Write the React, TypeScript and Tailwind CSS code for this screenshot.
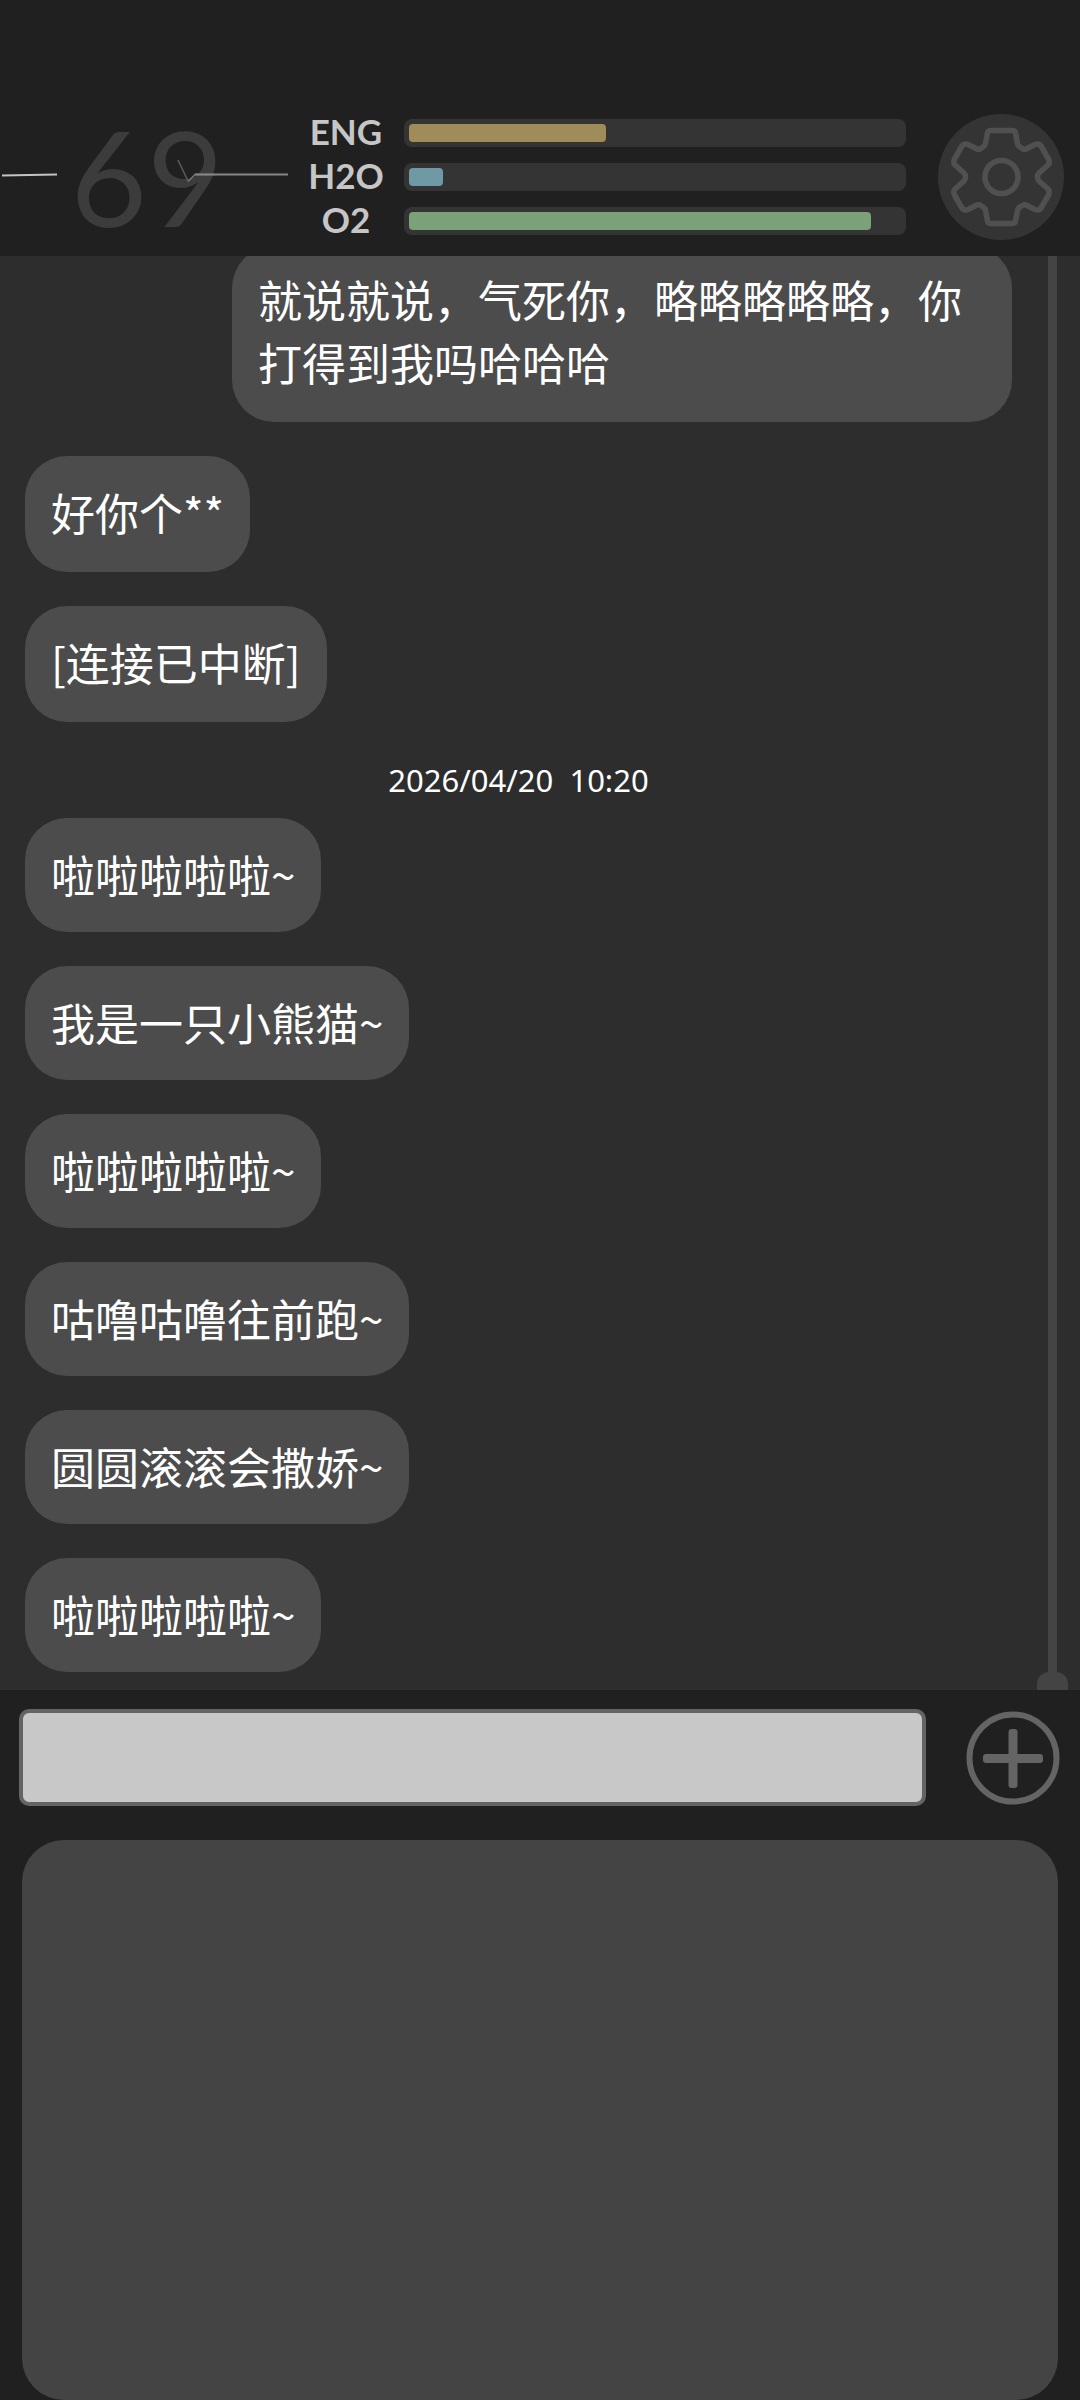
import React from "react";

type Message = {
  id: number;
  kind: "sent" | "received" | "time";
  text: string;
  tall?: boolean;
};

const messages: Message[] = [
  { id: 1, kind: "sent", text: "就说就说，气死你，略略略略略，你打得到我吗哈哈哈" },
  { id: 2, kind: "received", text: "好你个**", tall: true },
  { id: 3, kind: "received", text: "[连接已中断]", tall: true },
  { id: 4, kind: "time", text: "2026/04/20  10:20" },
  { id: 5, kind: "received", text: "啦啦啦啦啦~" },
  { id: 6, kind: "received", text: "我是一只小熊猫~" },
  { id: 7, kind: "received", text: "啦啦啦啦啦~" },
  { id: 8, kind: "received", text: "咕噜咕噜往前跑~" },
  { id: 9, kind: "received", text: "圆圆滚滚会撒娇~" },
  { id: 10, kind: "received", text: "啦啦啦啦啦~" },
];

const stats = [
  { name: "ENG", value: 40, color: "bg-[#a08c58]" },
  { name: "H2O", value: 7, color: "bg-[#6f9aa5]" },
  { name: "O2", value: 94, color: "bg-[#7aa177]" },
];

const HeartRate = () => (
  <div className="relative flex h-32 w-[290px] shrink-0 items-center justify-center pl-1 font-['Lato',sans-serif] text-[132px] leading-none text-[#3c3c3c]">
    <span>69</span>
    <svg
      className="absolute inset-0 h-full w-full"
      viewBox="0 0 290 128"
      fill="none"
      aria-hidden="true"
    >
      <path d="M2 63.5L57 62.5" stroke="#c4c4c4" strokeWidth="2" />
      <path d="M178 48L188 69" stroke="#5c5c5c" strokeWidth="1.5" />
      <path d="M188 69.5L195 62.5H215" stroke="#777" strokeWidth="1.5" />
      <path d="M195 62.5H288" stroke="#868686" strokeWidth="2" />
    </svg>
  </div>
);

const StatBars = () => (
  <div className="flex grow flex-col gap-2">
    {stats.map((stat) => (
      <div key={stat.name} className="flex h-9 items-center gap-[18px]">
        <span className="h-9 w-20 shrink-0 text-center font-['Lato',sans-serif] text-[35px] leading-[33px] font-bold text-[#c6c6c6]">
          {stat.name}
        </span>
        <div className="h-7 grow rounded-lg bg-[#343434] p-[5px]">
          <div
            className={`h-full rounded-sm ${stat.color}`}
            style={{ width: `${stat.value}%` }}
          />
        </div>
      </div>
    ))}
  </div>
);

const GearIcon = () => (
  <svg className="h-full w-full" viewBox="0 0 126 126" fill="none" aria-hidden="true">
    <g stroke="#505050" strokeWidth="5.6" strokeLinejoin="round">
      <path d="M53 16.5H74Q77 16.5 77.500 19L79.500 29.500Q80 32 82 33L85 35Q86 35.500 88 35L97 30.500Q101 29 103 32L110.500 45Q112 49 110 51L101 59Q99.500 60.500 99.500 63Q99.500 65.500 101 67L110 75Q112 77 110.500 81L103 94Q101 97 97 95.500L88 91Q86 90.500 85 91L82 93Q80 94 79.500 96.500L77.500 107Q77 109.500 74 109.500H53Q50 109.500 49.500 107L47.500 96.500Q47 94 45 93L42 91Q41 90.500 39 91L30 95.500Q26 97 24 94L16.500 81Q15 77 17 75L26 67Q27.500 65.500 27.500 63Q27.500 60.500 26 59L17 51Q15 49 16.500 45L24 32Q26 29 30 30.500L39 35Q41 35.500 42 35L45 33Q47 32 47.500 29.500L49.500 19Q50 16.500 53 16.500Z" />
      <circle cx="63.5" cy="63" r="16.5" />
    </g>
  </svg>
);

const Bubble = ({ message }: { message: Message }) => {
  if (message.kind === "time") {
    return (
      <time className="mt-1 -mb-4 self-center font-['Noto_Sans',sans-serif] text-[31px] leading-10 whitespace-pre">
        {message.text}
      </time>
    );
  }
  if (message.kind === "sent") {
    return (
      <div className="ml-[207px] self-end rounded-[42px] bg-[#4c4c4c] px-[26px] pt-[22px] pb-7 leading-[63px]">
        {message.text}
      </div>
    );
  }
  return (
    <div
      className={`self-start rounded-[42px] bg-[#4c4c4c] px-[26px] leading-[64px] ${
        message.tall ? "pt-6 pb-7" : "pt-6 pb-[26px]"
      }`}
    >
      {message.text}
    </div>
  );
};

const App = () => {
  return (
    <div className="flex min-h-screen flex-col bg-[#202020] text-white">
      <header className="flex h-64 shrink-0 items-end pr-4 pb-4">
        <HeartRate />
        <div className="flex grow items-center gap-8 pl-4">
          <StatBars />
          <button
            type="button"
            aria-label="设置"
            className="size-[126px] shrink-0 rounded-full bg-[#343434]"
          >
            <GearIcon />
          </button>
        </div>
      </header>

      {/* Chat history, scrolled to the newest message */}
      <main className="flex h-[1434px] shrink-0 overflow-hidden bg-[#2d2d2d]">
        <div className="flex grow flex-col justify-end gap-[34px] pb-[18px] pl-[25px] font-['Noto_Sans_CJK_SC',sans-serif] text-[44px]">
          {messages.map((message) => (
            <Bubble key={message.id} message={message} />
          ))}
        </div>
        <div className="ml-3 flex w-14 shrink-0 flex-col items-center">
          <div className="w-[9px] grow bg-[#444]" />
          <div className="h-[18px] w-[31px] rounded-t-xl bg-[#444]" />
        </div>
      </main>

      <footer className="flex grow flex-col">
        <form className="flex items-center gap-10 pt-[19px] pr-5 pl-[19px]">
          <input
            type="text"
            aria-label="消息"
            className="h-[97px] min-w-0 grow rounded-[10px] border-4 border-[#646464] bg-[#c8c8c8] px-4 text-[44px] text-[#202020] outline-none"
          />
          <button type="button" aria-label="添加" className="size-[94px] shrink-0">
            <svg viewBox="0 0 94 94" fill="none" aria-hidden="true">
              <circle cx="47" cy="47" r="43.5" stroke="#646464" strokeWidth="6" />
              <rect x="17" y="43" width="60" height="9" rx="3" fill="#646464" />
              <rect x="42.500" y="18" width="9" height="59" rx="3" fill="#646464" />
            </svg>
          </button>
        </form>
        <div className="mx-[22px] mt-[34px] min-h-[560px] grow rounded-[42px] bg-[#444]" />
      </footer>
    </div>
  );
};

export default App;
